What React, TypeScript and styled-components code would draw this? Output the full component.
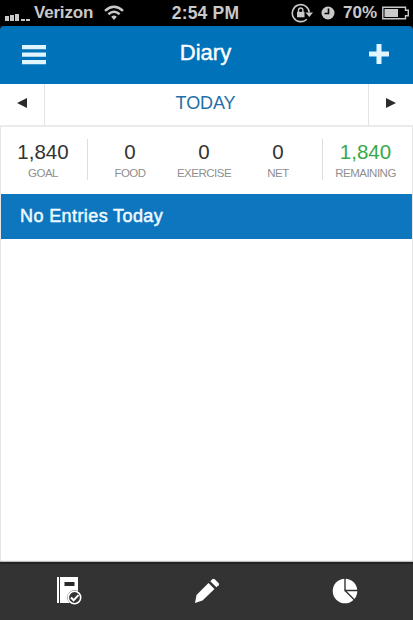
import React from "react";
import styled, { createGlobalStyle } from "styled-components";

const GlobalStyle = createGlobalStyle`
  * {
    box-sizing: border-box;
  }

  body {
    margin: 0;
    background: #000;
    font-family: "Liberation Sans", Arial, sans-serif;
  }

  svg {
    display: block;
  }
`;

const Screen = styled.div`
  display: flex;
  flex-direction: column;
  width: 413px;
  height: 620px;
  overflow: hidden;
`;

const StatusBar = styled.div`
  display: grid;
  grid-template-columns: 1fr auto 1fr;
  align-items: center;
  height: 26px;
  padding: 0 3px 0 5px;
  color: #c9c9c9;
  font-size: 17px;
  font-weight: bold;
  line-height: 26px;
`;

const StatusGroup = styled.div<{ $end?: boolean }>`
  display: flex;
  align-items: center;
  justify-content: ${({ $end }) => ($end ? "flex-end" : "flex-start")};
`;

const StatusText = styled.span<{ $size?: number; $spacing?: number }>`
  font-size: ${({ $size }) => $size || 17}px;
  letter-spacing: ${({ $spacing }) => $spacing || 0}px;
  white-space: nowrap;
`;

const Carrier = styled(StatusText)`
  margin: 0 11px 0 4px;
`;

const Time = styled(StatusText)`
  padding-right: 4px;
`;

const Battery = styled(StatusText)`
  margin: 0 5px 0 8px;
`;

const Header = styled.header`
  display: flex;
  align-items: center;
  justify-content: space-between;
  height: 58px;
  padding: 0 24px 0 22px;
  background: #0072ba;
  border-radius: 4px 4px 0 0;
`;

const Title = styled.h1`
  margin: 0;
  padding: 0 4px 4px 0;
  color: #fff;
  font-size: 22px;
  font-weight: normal;
  line-height: 26px;
  -webkit-text-stroke: 0.4px #fff;
`;

const IconButton = styled.button`
  display: flex;
  align-items: center;
  justify-content: center;
  padding: 0;
  border: 0;
  background: none;
`;

const TabButton = styled(IconButton)`
  padding: 0 0 2px 1px;
`;

const DateNav = styled.nav`
  display: grid;
  grid-template-columns: 45px 1fr 45px;
  height: 43px;
  background: #fff;
  border-bottom: 2px solid #ebebeb;
`;

const DateArrow = styled(IconButton)<{ $side: "left" | "right" }>`
  padding-bottom: 3px;
  ${({ $side }) =>
    $side === "left"
      ? "border-right: 1px solid #e3e3e3;"
      : "border-left: 1px solid #e3e3e3;"}
`;

const CurrentDate = styled.div`
  padding-right: 2px;
  color: #1f70a8;
  font-size: 18px;
  letter-spacing: -0.1px;
  line-height: 39px;
  text-align: center;
`;

const Content = styled.main`
  flex: 1;
  background: #fff;
  border: solid #e6e6e6;
  border-width: 0 1px;
`;

const Summary = styled.section`
  display: grid;
  grid-template-columns: 87px 234px 1fr;
  height: 67px;
  padding-top: 12px;
`;

const SummaryGroup = styled.div<{ $divided?: boolean }>`
  display: flex;
  justify-content: center;
  height: 41px;
  padding: ${({ $divided }) => ($divided ? "0 7px 0 5px" : "0 3px 0 0")};
  border: solid #dedede;
  border-width: ${({ $divided }) => ($divided ? "0 1px" : "0")};
  ${({ $divided }) => $divided && "margin-left: -1px; margin-right: -1px;"}
`;

const Stat = styled.div`
  display: flex;
  flex: 1;
  flex-direction: column;
  align-items: center;
`;

const StatValue = styled.div<{ $positive?: boolean }>`
  color: ${({ $positive }) => ($positive ? "#36a94c" : "#333")};
  font-size: 20.5px;
  line-height: 25px;
`;

const StatLabel = styled.div`
  color: #8f8f8f;
  font-size: 11.5px;
  letter-spacing: -0.5px;
  line-height: 18px;
`;

const Banner = styled.div`
  height: 45px;
  padding-left: 19px;
  background: #0d76bf;
  color: #effaff;
  font-size: 18px;
  letter-spacing: 0.4px;
  line-height: 44px;
  -webkit-text-stroke: 0.5px #effaff;
`;

const TabBar = styled.footer`
  display: grid;
  grid-template-columns: repeat(3, 1fr);
  height: 58px;
  background: #333;
  border-top: 2px solid #242424;
  box-shadow: 0 -1px 1px #bbb;
`;

const SignalIcon = () => (
  <svg width="25" height="18" viewBox="0 0 25 18" fill="#c9c9c9">
    <path d="M0 12h4v5H0zM5 11h4v6H5zM10 10h4v7h-4zM16 15h4v2h-4zM21 15h4v2h-4z" />
  </svg>
);

const WifiIcon = () => (
  <svg width="20" height="16" viewBox="0 0 20 16" fill="none" stroke="#c9c9c9">
    <path d="M1 5.8Q10-2.4 19 5.8" strokeWidth="2.5" />
    <path d="M4.4 9.2Q10 4.2 15.6 9.2" strokeWidth="2.5" />
    <path d="M7.2 11.8Q10 9.2 12.8 11.8L10 15z" fill="#c9c9c9" stroke="none" />
  </svg>
);

const RotationLockIcon = () => (
  <svg width="22" height="20" viewBox="0 0 22 20" fill="none" stroke="#c9c9c9">
    <path d="M15.8 16.2A8.5 8.5 0 1 1 18.3 9.5" strokeWidth="1.6" />
    <path d="M14.5 9.5H22L18.3 14z" fill="#c9c9c9" stroke="none" />
    <path d="M6 8.8h7.5v5.5H6z" fill="#c9c9c9" stroke="none" />
    <path d="M7.5 9V7.2a2.2 2.2 0 0 1 4.4 0V9" strokeWidth="1.4" />
  </svg>
);

const Clock = styled.svg`
  margin-left: 8px;
`;

const ClockIcon = () => (
  <Clock width="14" height="14" viewBox="0 0 14 14">
    <circle cx="7" cy="7" r="6.5" fill="#c9c9c9" />
    <path d="M7.5 2.5v5H3.5" fill="none" stroke="#000" strokeWidth="1.6" />
  </Clock>
);

const BatteryIcon = () => (
  <svg width="28" height="14" viewBox="0 0 28 14" fill="#c9c9c9">
    <path
      d="M.8 1.2h22.7v3h2.8v5.6h-2.8v3H.8z"
      fill="none"
      stroke="#c9c9c9"
      strokeWidth="1.4"
    />
    <path d="M2.5 3h13.5v8H2.5z" />
  </svg>
);

const DiaryIcon = () => (
  <svg width="26" height="28" viewBox="0 0 26 28">
    <path d="M1 0h2v26H1zM4 0h18v26H4z" fill="#fff" />
    <path d="M8.5 5h10v4h-10z" fill="#292929" />
    <circle cx="18.5" cy="20.5" r="7.2" fill="#333" />
    <circle
      cx="18.5"
      cy="20.5"
      r="6.2"
      fill="#333"
      stroke="#fff"
      strokeWidth="1.6"
    />
    <path
      d="M15 20.5l2.6 2.8 4.9-5.2"
      fill="none"
      stroke="#fff"
      strokeWidth="2"
    />
  </svg>
);

const PencilIcon = () => (
  <svg width="26" height="26" viewBox="0 0 26 26" fill="#fff">
    <path d="M1 25l1.5-8L14.5 5l6 6L8.5 22.5z" />
    <path d="M16.3 3.3l2-2q1.2-1 2.4 0L24.6 5q1 1.2 0 2.3l-2.2 2z" />
  </svg>
);

const PieIcon = () => (
  <svg width="26" height="26" viewBox="0 0 26 26">
    <circle cx="13" cy="13" r="12.3" fill="#fff" />
    <path
      d="M13 0v12.5h13M13 12.5l9.5 9.5"
      fill="none"
      stroke="#333"
      strokeWidth="1.4"
    />
  </svg>
);

interface StatItem {
  label: string;
  value: string;
  positive?: boolean;
}

const groups: StatItem[][] = [
  [{ label: "GOAL", value: "1,840" }],
  [
    { label: "FOOD", value: "0" },
    { label: "EXERCISE", value: "0" },
    { label: "NET", value: "0" },
  ],
  [{ label: "REMAINING", value: "1,840", positive: true }],
];

const App = () => {
  return (
    <Screen>
      <GlobalStyle />
      <StatusBar>
        <StatusGroup>
          <SignalIcon />
          <Carrier $spacing={-0.2}>Verizon</Carrier>
          <WifiIcon />
        </StatusGroup>
        <Time $size={17.5} $spacing={0.2}>
          2:54 PM
        </Time>
        <StatusGroup $end>
          <RotationLockIcon />
          <ClockIcon />
          <Battery>70%</Battery>
          <BatteryIcon />
        </StatusGroup>
      </StatusBar>
      <Header>
        <IconButton aria-label="Menu">
          <svg width="24" height="20" viewBox="0 0 24 20" fill="#e0f5ff">
            <path d="M0 0h24v4.3H0zM0 7.5h24v4.3H0zM0 15h24v4.3H0z" />
          </svg>
        </IconButton>
        <Title>Diary</Title>
        <IconButton aria-label="Add">
          <svg width="20" height="22" viewBox="0 0 20 22" fill="#e0f5ff">
            <path d="M7.5 0h5v7.5H20v5h-7.5V20h-5v-7.5H0v-5h7.5z" />
          </svg>
        </IconButton>
      </Header>
      <DateNav>
        <DateArrow $side="left" aria-label="Previous day">
          <svg width="10" height="10" viewBox="0 0 10 10" fill="#2b2b2b">
            <path d="M0 5l10-5v10z" />
          </svg>
        </DateArrow>
        <CurrentDate>TODAY</CurrentDate>
        <DateArrow $side="right" aria-label="Next day">
          <svg width="10" height="10" viewBox="0 0 10 10" fill="#2b2b2b">
            <path d="M10 5L0 0v10z" />
          </svg>
        </DateArrow>
      </DateNav>
      <Content>
        <Summary>
          {groups.map((group, index) => (
            <SummaryGroup key={index} $divided={group.length > 1}>
              {group.map(({ label, value, positive }) => (
                <Stat key={label}>
                  <StatValue $positive={positive}>{value}</StatValue>
                  <StatLabel>{label}</StatLabel>
                </Stat>
              ))}
            </SummaryGroup>
          ))}
        </Summary>
        <Banner>No Entries Today</Banner>
      </Content>
      <TabBar>
        <TabButton aria-label="Diary">
          <DiaryIcon />
        </TabButton>
        <TabButton aria-label="Edit">
          <PencilIcon />
        </TabButton>
        <TabButton aria-label="Reports">
          <PieIcon />
        </TabButton>
      </TabBar>
    </Screen>
  );
};

export default App;
